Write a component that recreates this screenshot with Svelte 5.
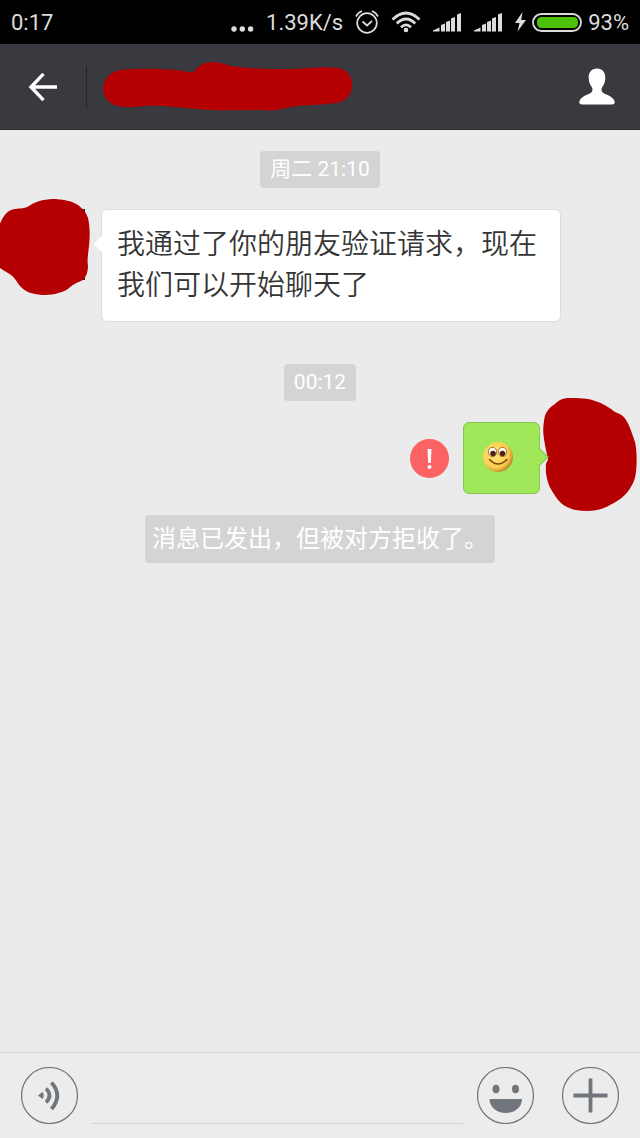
<script>
	let draft = $state('');

	// x and top of each bar after the sloped first step
	const bars = [
		[8, 11.5],
		[13, 8.5],
		[18, 5],
		[24, 1]
	];
</script>

{#snippet signal()}
	<svg width="29" height="20" viewBox="0 0 29 20" fill="#dcdcdc" aria-hidden="true">
		<path d="M0 19.500v-1l6.500-3v4z" />
		{#each bars as [x, y]}
			<path d="M{x} {y + 1.5}l4-1.500V19.500h-4z" />
		{/each}
	</svg>
{/snippet}

<div class="screen">
	<div class="status">
		<span class="clock">0:17</span>
		<svg width="23" height="20" viewBox="0 0 23 20" fill="#dcdcdc" aria-hidden="true">
			<circle cx="3" cy="17" r="2.700" />
			<circle cx="11.300" cy="17" r="2.700" />
			<circle cx="19.600" cy="17" r="2.700" />
		</svg>
		<span>1.39K/s</span>
		<svg width="24" height="24" viewBox="0 0 24 24" fill="none" stroke="#dcdcdc" stroke-width="1.700" aria-hidden="true">
			<circle cx="12" cy="13" r="9.800" />
			<path d="M7.500 11.500l4.500 4 5-4.500M1 6.500Q3 2.500 7 1M23 6.500Q21 2.500 17 1" />
		</svg>
		<svg width="30" height="22" viewBox="0 0 30 22" fill="none" stroke="#dcdcdc" stroke-width="2.700" aria-hidden="true">
			<path d="M1.500 8.500Q15-4.500 28.500 8.500M5.800 12.500Q15 3.500 24.200 12.500M10 16.300Q15 11.500 20 16.300" />
			<circle cx="15" cy="19" r="2.300" fill="#dcdcdc" stroke="none" />
		</svg>
		{@render signal()}
		{@render signal()}
		<div class="power">
			<svg width="11" height="20" viewBox="0 0 11 20" fill="#dcdcdc" aria-hidden="true">
				<path d="M7.500 0L0 11h4.500L2.500 19.500 11 8H6.200z" />
			</svg>
			<svg width="50" height="19" viewBox="0 0 50 19" aria-hidden="true">
				<rect x="1" y="1" width="48" height="17" rx="8.500" fill="#000" stroke="#dcdcdc" stroke-width="1.800" />
				<rect x="5" y="4" width="41" height="11" rx="4.500" fill="#4dc00c" />
			</svg>
			<span>93%</span>
		</div>
	</div>

	<header>
		<button class="back" aria-label="Back">
			<svg width="30" height="30" viewBox="0 0 30 30" fill="none" stroke="#fff" stroke-width="3.400">
				<path d="M15.500 1.800L3 15l12.500 13.200M3 15h26" />
			</svg>
		</button>
		<svg class="title" width="250" height="50" viewBox="0 0 250 50" aria-hidden="true">
			<path
				fill="#b40000"
				d="M18 8C34 6 56 7 74 8c8 1 13 3 17 2C94 5 100 0 108 0c8 0 13 2 20 4 20 3 42 3 62 3 17-1 32-3 45-1 9 1 15 9 14 19-1 9-7 15-16 16-16 2-32 2-46 4-9 3-18 4-28 3-22 0-48 1-66-1C73 45 55 43 42 44c-10 1-19 2-27 0C6 42 0 35 0 27 0 17 8 9 18 8z"
			/>
		</svg>
		<button class="contact" aria-label="Contact">
			<svg width="36" height="37" viewBox="0 0 36 37" fill="#fff">
				<path
					d="M18 .5c-5.500 0-8.500 4-8.300 9.500.1 4 1.300 6.800 3 9 1 1.500 1.200 3.500 0 5C10.500 26.500 3 27.500.7 32.500.2 34 .2 35 .8 35.700c.5.600 1.200.8 2.200.8h30c1 0 1.700-.2 2.200-.8.6-.7.6-1.700.1-3.200C33 27.500 25.500 26.500 23.300 24c-1.200-1.500-1-3.500 0-5 1.700-2.200 2.900-5 3-9C26.500 4.500 23.500.5 18 .5z"
				/>
			</svg>
		</button>
	</header>

	<main>
		<time>周二 21:10</time>

		<div class="row received">
			<svg class="avatar" width="72" height="72" viewBox="0 0 72 72" aria-hidden="true">
				<path d="M60 0h12v71H60z" fill="#222" />
				<path
					fill="#b40000"
					d="M-14 17C-10 7-6 1 2 0c6-1 9 0 14-3C24-9 34-10 43-10c9 1 16 2 22 6 5 4 8 7 10 13 2 9 2 17 1 28-1 9-2 14-1 20 0 6-2 11-5 14-6 3-10 4-15 9C47 85 37 86 29 86 19 85 12 83 7 77c-4-5-5-9-12-13-8-4-13-9-20-16V17z"
				/>
			</svg>
			<div class="bubble">我通过了你的朋友验证请求&#xFF0C;现在我们可以开始聊天了</div>
		</div>

		<time>00:12</time>

		<div class="row sent">
			<button class="failed" aria-label="Resend">
				<svg width="39" height="39" viewBox="0 0 39 39">
					<circle cx="19.500" cy="19.500" r="19.500" fill="#fa6264" />
					<path d="M17.500 10h4l-.7 14h-2.600z" fill="#fff" />
					<circle cx="19.500" cy="28" r="2" fill="#fff" />
				</svg>
			</button>
			<div class="bubble">
				<svg width="32" height="32" viewBox="0 0 32 32" role="img" aria-label="Smile">
					<defs>
						<radialGradient id="face" cx=".4" cy=".4" r=".65">
							<stop offset="0" stop-color="#ffe678" />
							<stop offset=".7" stop-color="#fbcf50" />
							<stop offset="1" stop-color="#b87c22" />
						</radialGradient>
					</defs>
					<circle cx="16" cy="16" r="15" fill="url(#face)" />
					<ellipse cx="10.500" cy="11" rx="4.200" ry="4.700" fill="#fff" stroke="#a87428" stroke-width="1" />
					<ellipse cx="20.500" cy="11" rx="4.200" ry="4.700" fill="#fff" stroke="#a87428" stroke-width="1" />
					<circle cx="11" cy="12.500" r="2.800" fill="#562010" />
					<circle cx="20.500" cy="12.500" r="2.800" fill="#562010" />
					<path d="M7.500 18.500q8.500 9 17.500 0" fill="none" stroke="#78430c" stroke-width="1.500" stroke-linecap="round" />
				</svg>
			</div>
			<svg class="avatar" width="72" height="72" viewBox="0 0 72 72" aria-hidden="true">
				<path
					fill="#b40000"
					d="M-10-1C-9-10-5-14 1-18c4-4 8-6 14-6 10 0 19 0 26 3 7 2 14 6 20 11 5 2 8 3 11 8 4 6 6 14 9 22 2 9 2 20 1 30-1 8-3 12-7 18-5 7-11 11-19 15-7 4-14 6-23 6-8 0-14-1-20-4C5 81 2 75-2 69c-4-6-5-12-6-18 0-7-1-9 2-13C-7 32-9 24-10 17c-1-7-1-12 0-18z"
				/>
			</svg>
		</div>

		<p class="notice">消息已发出&#xFF0C;但被对方拒收了。</p>
	</main>

	<footer>
		<button aria-label="Voice message">
			<svg width="57" height="57" viewBox="0 0 57 57" fill="none" stroke="#71767c">
				<circle cx="28.500" cy="28.500" r="28" stroke-width="1.200" />
				<path d="M17 28.500l4.500-3.500q2.500 3.500 0 7z" fill="#71767c" stroke="none" />
				<path d="M25 21.500q7 7 0 14" stroke-width="3.600" />
				<path d="M30.500 15.500q11.500 13 0 26.500" stroke-width="3.800" />
			</svg>
		</button>
		<input type="text" aria-label="Message" bind:value={draft} />
		<button aria-label="Emoji">
			<svg width="57" height="57" viewBox="0 0 57 57" fill="#71767c">
				<circle cx="28.500" cy="28.500" r="28" fill="none" stroke="#71767c" stroke-width="1.200" />
				<ellipse cx="19" cy="22" rx="3.500" ry="4.300" />
				<ellipse cx="38.500" cy="22" rx="3.500" ry="4.300" />
				<path d="M12.500 32h32.500c0 8-7 14-16.200 14S12.500 40 12.500 32z" />
			</svg>
		</button>
		<button class="more" aria-label="More">
			<svg width="57" height="57" viewBox="0 0 57 57" fill="none" stroke="#71767c">
				<circle cx="28.500" cy="28.500" r="28" stroke-width="1.200" />
				<path d="M28.500 11.500v34M11.500 28.500h34" stroke-width="3.800" />
			</svg>
		</button>
	</footer>
</div>

<style>
	:global(body) {
		margin: 0;
	}

	.screen {
		display: flex;
		flex-direction: column;
		min-height: 100vh;
		background: #ebebeb;
		font-family: Roboto, 'Noto Sans CJK SC', sans-serif;
	}

	button {
		display: flex;
		padding: 0;
		border: none;
		background: none;
		cursor: pointer;
	}

	svg {
		display: block;
		flex-shrink: 0;
	}

	.status {
		display: flex;
		align-items: center;
		gap: 12px;
		height: 44px;
		padding: 0 11px;
		background: #000;
		color: #dcdcdc;
		font-size: 22px;
	}

	.clock {
		margin-right: auto;
	}

	.power {
		display: flex;
		align-items: center;
		gap: 6px;
	}

	header {
		display: flex;
		align-items: center;
		height: 86px;
		box-sizing: border-box;
		padding-right: 25px;
		background: #393a3f;
		border-bottom: 1px solid #2c2d31;
	}

	.back {
		width: 87px;
		height: 42px;
		box-sizing: border-box;
		align-items: center;
		justify-content: center;
		border-right: 1px solid #242529;
	}

	.title {
		margin: 0 auto 0 16px;
	}

	main {
		flex: 1;
		display: flex;
		flex-direction: column;
		align-items: center;
		gap: 21px;
		padding: 21px 0;
	}

	time,
	.notice {
		margin: 0;
		background: #d4d4d4;
		color: #fff;
		border-radius: 4px;
	}

	time {
		padding: 0 10px;
		font-size: 21px;
		line-height: 37px;
	}

	.notice {
		padding: 0 7px;
		font-size: 24px;
		line-height: 48px;
	}

	.row {
		display: flex;
		align-items: flex-start;
		align-self: stretch;
	}

	.received {
		gap: 16px;
		padding: 0 13px;
		margin-bottom: 21px;
	}

	.sent {
		justify-content: flex-end;
		gap: 14px;
		padding: 0 14px;
	}

	.avatar {
		overflow: visible;
	}

	.bubble {
		position: relative;
		box-sizing: border-box;
		border: 1px solid #dcdcdc;
		border-radius: 6px;
	}

	.bubble::before {
		content: '';
		position: absolute;
		width: 12px;
		height: 12px;
		transform: rotate(45deg);
	}

	.received .bubble {
		max-width: 460px;
		padding: 14px 15px 15px;
		background: #fff;
		color: #353535;
		font-size: 28px;
		font-weight: 350;
		line-height: 41px;
	}

	.received .bubble::before {
		left: -6px;
		top: 28px;
		background: #fff;
	}

	.sent .bubble {
		padding: 18px 25px 20px 18px;
		background: #a0e75a;
		border-color: #86c64b;
	}

	.sent .bubble::before {
		right: -7px;
		top: 28px;
		box-sizing: border-box;
		border: solid #86c64b;
		border-width: 1px 1px 0 0;
		background: #a0e75a;
	}

	.failed {
		align-self: center;
	}

	footer {
		display: flex;
		align-items: center;
		gap: 14px;
		height: 85px;
		padding: 0 21px;
		border-top: 1px solid #d9d9d9;
		background: #ececec;
	}

	footer input {
		flex: 1;
		min-width: 0;
		height: 57px;
		box-sizing: border-box;
		padding: 0;
		border: none;
		border-bottom: 1px solid #d2d2d2;
		background: none;
		outline: none;
		font: inherit;
		font-size: 28px;
	}

	.more {
		margin-left: 14px;
	}
</style>
